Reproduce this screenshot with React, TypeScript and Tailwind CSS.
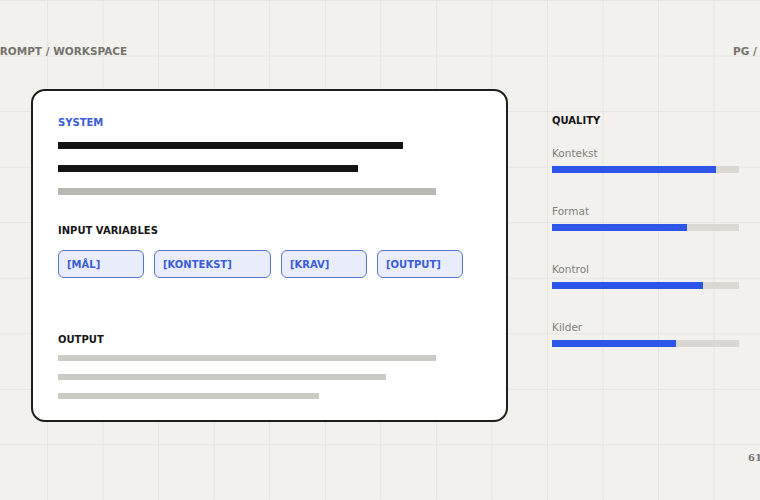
const vars = [
  { label: "[MÅL]", w: "w-[86px]" },
  { label: "[KONTEKST]", w: "w-[117px]" },
  { label: "[KRAV]", w: "w-[86px]" },
  { label: "[OUTPUT]", w: "w-[86px]" },
];

const quality = [
  { label: "Kontekst", value: 164 },
  { label: "Format", value: 135 },
  { label: "Kontrol", value: 151 },
  { label: "Kilder", value: 124 },
];

function Card() {
  return (
    <div className="h-[333px] w-[477px] shrink-0 rounded-[14px] border-2 border-[#1e1e1e] bg-white pl-[25px] pt-[26px]">
      <p className="text-[10px] font-bold leading-[12px] text-[#3b5bd9]">SYSTEM</p>
      <div className="mt-[13px] h-[7px] w-[345px] bg-[#141414]" />
      <div className="mt-[16px] h-[7px] w-[300px] bg-[#141414]" />
      <div className="mt-[16px] h-[7px] w-[378px] bg-[#b9b9b3]" />

      <p className="mt-[30px] text-[10px] font-bold leading-[12px] text-[#161616]">INPUT VARIABLES</p>
      <div className="mt-[13px] flex gap-[10px]">
        {vars.map((v) => (
          <div
            key={v.label}
            className={`${v.w} flex h-[28px] items-center rounded-[6px] border-[1.5px] border-[#5574d4] bg-[#e9edfb] pl-[8px] text-[10px] font-bold text-[#3b5bd9]`}
          >
            {v.label}
          </div>
        ))}
      </div>

      <p className="mt-[56px] text-[10px] font-bold leading-[12px] text-[#161616]">OUTPUT</p>
      <div className="mt-[9px] flex flex-col gap-[13px]">
        <div className="h-[6px] w-[378px] bg-[#cbcbc5]" />
        <div className="h-[6px] w-[328px] bg-[#cbcbc5]" />
        <div className="h-[6px] w-[261px] bg-[#cbcbc5]" />
      </div>
    </div>
  );
}

function Quality() {
  return (
    <div className="ml-[44px] w-[187px] shrink-0 pt-[26px]">
      <p className="text-[10px] font-bold leading-[12px] text-[#161616]">QUALITY</p>
      <div className="mt-[19px] flex flex-col gap-[31px]">
        {quality.map((q) => (
          <div key={q.label}>
            <p className="text-[10.5px] leading-[14px] text-[#82807b]">{q.label}</p>
            <div className="mt-[6px] h-[7px] w-full bg-[#d9d8d2]">
              <div className="h-full bg-[#2d55e8]" style={{ width: q.value }} />
            </div>
          </div>
        ))}
      </div>
    </div>
  );
}

export default function App() {
  return (
    <div className="h-[500px] w-[760px] overflow-hidden bg-[#f2f1ed] bg-[linear-gradient(to_right,#e6e5e0_1px,transparent_1px),linear-gradient(to_bottom,#e6e5e0_1px,transparent_1px)] bg-[size:55.56px_55.56px] bg-[position:47px_0px] font-['DejaVu_Sans',sans-serif]">
      <header className="-ml-[8px] flex w-[800px] justify-between whitespace-nowrap pt-[44px] text-[10.5px] font-bold leading-[14px] text-[#75736e]">
        <span>PROMPT / WORKSPACE</span>
        <span className="w-[59px]">PG / 01</span>
      </header>

      <main className="mt-[31px] flex pl-[31px]">
        <Card />
        <Quality />
      </main>

      <footer className="ml-[748px] mt-[30px] whitespace-nowrap font-['DejaVu_Serif',serif] text-[10px] font-bold leading-[12px] text-[#7a7873]">
        61
      </footer>
    </div>
  );
}
